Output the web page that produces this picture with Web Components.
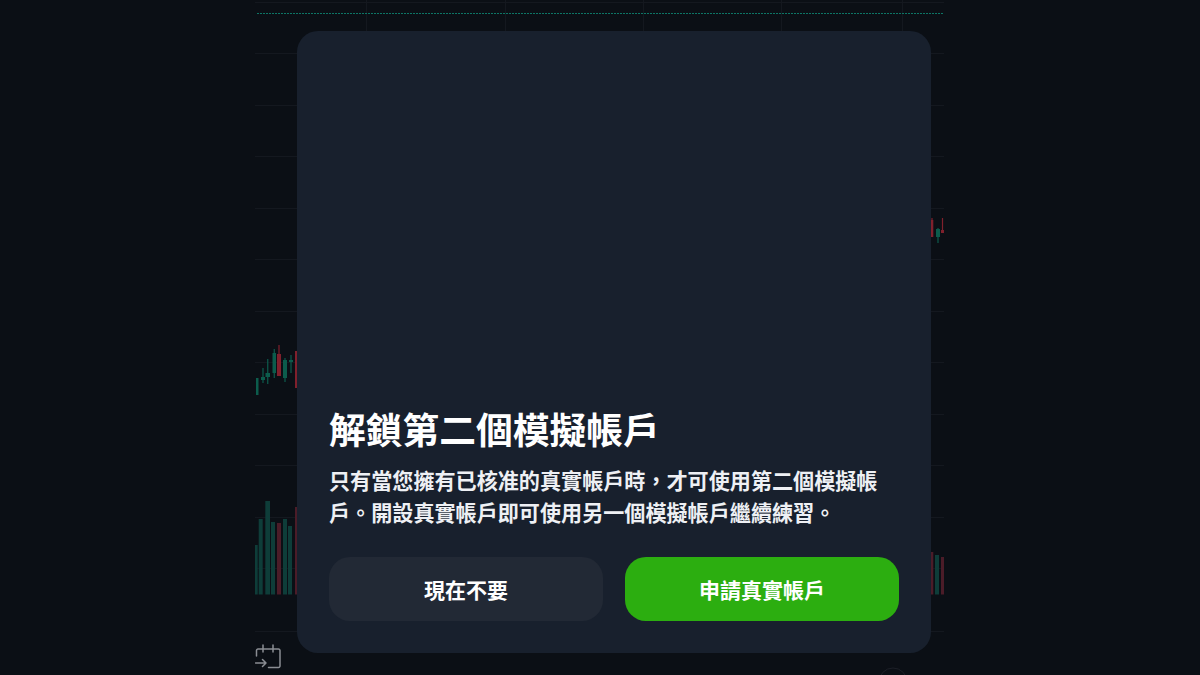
<!DOCTYPE html>
<html lang="zh-Hant">
<head>
<meta charset="utf-8">
<title>解鎖第二個模擬帳戶</title>
<style>
  html, body { margin: 0; height: 100%; background: #0b0f15; overflow: hidden; }
  body { font-family: "Noto Sans CJK TC", "Liberation Sans", sans-serif; }
</style>
</head>
<body>
<trade-screen>
  <chart-backdrop slot="chart"></chart-backdrop>
  <unlock-dialog slot="dialog" heading="解鎖第二個模擬帳戶">
    只有當您擁有已核准的真實帳戶時，才可使用第二個模擬帳戶。開設真實帳戶即可使用另一個模擬帳戶繼續練習。
    <dialog-button slot="actions">現在不要</dialog-button>
    <dialog-button slot="actions" primary>申請真實帳戶</dialog-button>
  </unlock-dialog>
</trade-screen>

<script>
// page frame: the chart column sits behind, dialog floats over it
class TradeScreen extends HTMLElement {
  constructor() {
    super();
    this.attachShadow({ mode: "open" }).innerHTML = `
      <style>
        :host { display: block; position: relative; width: 1200px; height: 675px; overflow: hidden; }
        .chart { display: flex; justify-content: center; height: 100%; }
        .overlay { position: absolute; left: 297px; top: 31px; }
      </style>
      <div class="chart"><slot name="chart"></slot></div>
      <div class="overlay"><slot name="dialog"></slot></div>
    `;
  }
}

class ChartBackdrop extends HTMLElement {
  constructor() {
    super();
    const green = "#0c5c4c", red = "#80202c", volGreen = "#0e3d39", volRed = "#4b1c28", grid = "#14181f";

    // [left, right, wickTop, wickBottom, bodyTop, bodyBottom, colour], x is page x minus 255
    const candles = [
      [1, 3.5, 378, 395, 378, 395, green],
      [6, 10, 368, 383, 377, 380, green],
      [10.5, 15, 359, 384, 373, 377, green],
      [17.5, 21, 349, 378, 353, 373, green],
      [22, 26, 345, 376, 354, 376, red],
      [28, 32, 358, 382, 360, 378, green],
      [34, 38, 355, 373, 360, 362, green],
      [40, 42, 351, 388, 351, 388, red],
      [675.7, 678.3, 218, 237, 220, 237, red],
      [681, 685, 228, 243, 229, 237, green],
      [686, 689, 218, 233, 230, 233, red]
    ];
    // [left, right, top, colour], all bars end on the volume baseline
    const volumes = [
      [0, 2.7, 545, volGreen], [3.7, 7.7, 519, volGreen], [10.3, 15, 501, volGreen], [16, 20, 522, volGreen],
      [22, 26, 523, volRed], [28, 32, 519, volGreen], [33, 37, 526, volGreen], [40, 42, 507, volRed],
      [676, 678.3, 552, volRed], [680, 684, 555, volGreen], [686, 689, 557, volRed]
    ];
    const rows = [2, 53, 105, 156, 208, 259, 311, 362, 414, 465, 517, 568, 631];
    const cols = [111, 250, 388, 526, 647];

    const gridLines = rows.map(y => `<line x1="0" x2="689" y1="${y + 0.5}" y2="${y + 0.5}"/>`).join("")
      + cols.map(x => `<line x1="${x + 0.5}" x2="${x + 0.5}" y1="0" y2="631"/>`).join("");
    const candleShapes = candles.map(([l, r, wt, wb, bt, bb, c]) =>
      `<rect x="${(l + r) / 2 - 0.6}" y="${wt}" width="1.2" height="${wb - wt}" fill="${c}"/>
       <rect x="${l}" y="${bt}" width="${r - l}" height="${bb - bt}" fill="${c}"/>`).join("");
    const volumeShapes = volumes.map(([l, r, top, c]) =>
      `<rect x="${l}" y="${top}" width="${r - l}" height="${594.5 - top}" fill="${c}"/>`).join("");

    this.attachShadow({ mode: "open" }).innerHTML = `
      <style>
        :host { display: block; width: 690px; height: 675px; }
        svg { display: block; }
        .plot { filter: blur(0.35px); }
      </style>
      <svg width="690" height="675" viewBox="0 0 690 675" fill="none">
        <g stroke="${grid}" stroke-width="1">${gridLines}</g>
        <line x1="2" x2="689" y1="13.500" y2="13.500" stroke="#0d7565" stroke-width="1.200" stroke-dasharray="2 1"/>
        <g class="plot">
          ${volumeShapes}
          ${candleShapes}
        </g>
        <g stroke="#8a8d93" stroke-width="1.500" stroke-linecap="round" stroke-linejoin="round">
          <path d="M1.500 656V650.500a1.500 1.500 0 0 1 1.500-1.500H23.500a1.500 1.500 0 0 1 1.500 1.500V666a1.500 1.500 0 0 1-1.500 1.500H13.500"/>
          <path d="M8 645V652M18 645V652"/>
          <path d="M0.500 663H11M7.500 659.500L11 663L7.500 666.500"/>
        </g>
        <circle cx="638" cy="682" r="14" stroke="#1c1f27"/>
      </svg>
    `;
  }
}

class UnlockDialog extends HTMLElement {
  constructor() {
    super();
    this.attachShadow({ mode: "open" }).innerHTML = `
      <style>
        :host {
          display: flex; flex-direction: column; justify-content: flex-end; box-sizing: border-box;
          width: 634px; height: 622px; padding: 32px;
          background: #18202d; border-radius: 21px; color: #fff;
        }
        h2 { margin: 0 0 12px; font-size: 36.75px; line-height: 48px; font-weight: 700; }
        p { margin: 0 0 29px; font-size: 21.1px; line-height: 32px; font-weight: 700; color: #eef0f4; }
        .actions { display: grid; grid-template-columns: 1fr 1fr; gap: 22px; }
      </style>
      <h2></h2>
      <p><slot></slot></p>
      <div class="actions"><slot name="actions"></slot></div>
    `;
    this.shadowRoot.querySelector("h2").textContent = this.getAttribute("heading");
  }
}

class DialogButton extends HTMLElement {
  constructor() {
    super();
    this.attachShadow({ mode: "open" }).innerHTML = `
      <style>
        :host {
          display: flex; align-items: center; justify-content: center; height: 64px;
          border-radius: 21px; background: #222935; color: #fff;
          font-size: 21px; font-weight: 700; cursor: pointer;
        }
        :host([primary]) { background: #2cae10; }
      </style>
      <slot></slot>
    `;
  }
}

customElements.define("trade-screen", TradeScreen);
customElements.define("chart-backdrop", ChartBackdrop);
customElements.define("unlock-dialog", UnlockDialog);
customElements.define("dialog-button", DialogButton);
</script>
</body>
</html>
